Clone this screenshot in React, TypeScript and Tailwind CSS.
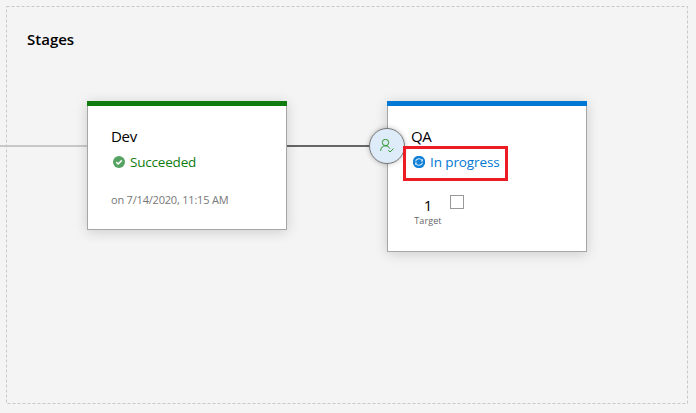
import type { ReactNode } from "react";

function SuccessIcon() {
  return (
    <svg width="12" height="12" viewBox="0 0 12 12" className="shrink-0">
      <circle cx="6" cy="6" r="6" fill="#55a362" />
      <path d="M3.3 6.1 5.2 8 8.8 4.4" fill="none" stroke="#fff" strokeWidth="1.5" />
    </svg>
  );
}

function ProgressIcon() {
  return (
    <svg width="12" height="12" viewBox="0 0 12 12" className="shrink-0">
      <circle cx="6" cy="6" r="6.2" fill="#0f80d7" />
      <path
        d="M2.5 5.3A3.6 3.4 0 0 1 8.9 4.2M9.5 6.7A3.6 3.4 0 0 1 3.1 7.8"
        fill="none"
        stroke="#c2dff5"
        strokeWidth="1.2"
      />
      <path d="M10 2.8V5.4H7.4ZM2 9.2V6.6H4.6Z" fill="#c2dff5" />
    </svg>
  );
}

function ApproverIcon() {
  return (
    <svg width="14" height="15" viewBox="0 0 14 15" fill="none" stroke="#2c962c" strokeWidth="1">
      <circle cx="5.5" cy="3.5" r="3.2" />
      <path d="M0.6 11.8C0.8 8.7 2.7 6.8 5.5 6.8C7.5 6.8 8.9 7.8 9.7 9.6" />
      <path d="M8.3 11.2 10.1 13 13.6 9.5" />
    </svg>
  );
}

function StageCard({ accent, size, children }: { accent: string; size: string; children: ReactNode }) {
  return (
    <section
      className={`relative w-[200px] shrink-0 border border-t-0 border-[#a6a6a6] bg-white shadow-[0_2px_12px_rgba(0,0,0,0.16)] ${size}`}
    >
      <div className={`-mx-px h-[5px] ${accent}`} />
      {children}
    </section>
  );
}

export default function App() {
  return (
    <main className="h-[413px] w-[696px] overflow-hidden bg-[#f4f4f4] pt-[6px] font-['Open_Sans','Noto_Sans',sans-serif] text-black">
      <div className="relative h-[398px]">
        <svg className="absolute top-0 left-[6px]" width="682" height="398">
          <rect x="0.5" y="0.5" width="681" height="397" fill="none" stroke="#c8c8c8" strokeDasharray="3 2" />
        </svg>
        <h1 className="ml-[27px] pt-[23px] pb-px text-[15px] leading-[20px] font-semibold tracking-[0px]">Stages</h1>
        <div className="mt-[51px] flex items-start">
          <div className="mt-[44px] h-[2px] w-[87px] bg-[#c8c8c8]" />
          <StageCard accent="bg-[#107c10]" size="h-[129px]">
            <div className="pt-[20px] pl-[23px]">
              <h2 className="text-[15px] leading-[20px] font-normal tracking-[-0.3px]">Dev</h2>
              <div className="mt-[6px] ml-[2px] flex h-[20px] items-center gap-[5px] text-[#107c10]">
                <SuccessIcon />
                <span className="text-[13.5px] leading-[20px] tracking-[-0.2px]">Succeeded</span>
              </div>
              <p className="mt-[20px] text-[11px] leading-[16px] tracking-[-0.2px] text-[#777]">on 7/14/2020, 11:15 AM</p>
            </div>
          </StageCard>
          <div className="mt-[44px] h-[2px] w-[100px] bg-[#666]" />
          <StageCard accent="bg-[#0078d4]" size="h-[151px]">
            <div className="absolute top-[27px] -left-[19px] flex size-[36px] items-center justify-center rounded-full border border-[#777] bg-[#deecf9] shadow-[0_0_5px_rgba(0,0,0,0.25)]">
              <ApproverIcon />
            </div>
            <div className="pt-[20px] pl-[23px]">
              <h2 className="text-[15px] leading-[20px] font-normal tracking-[-0.3px]">QA</h2>
              <div className="mt-[6px] ml-[2px] flex h-[20px] items-center gap-[5px] text-[#0078d4]">
                <ProgressIcon />
                <span className="text-[13.5px] leading-[20px] tracking-[-0.1px]">In progress</span>
              </div>
              <div className="mt-[23px] flex items-start gap-[7px] pl-[2px]">
                <div className="flex w-[30px] flex-col items-center">
                  <span className="text-[15px] leading-[20px]">1</span>
                  <span className="text-[9px] leading-[12px] tracking-[0.1px] text-[#666]">Target</span>
                </div>
                <div className="size-[14px] border border-[#999] bg-white" />
              </div>
            </div>
            <div className="absolute top-[45px] left-[15px] h-[35px] w-[105px] border-[3px] border-[#ed1c24]" />
          </StageCard>
        </div>
      </div>
    </main>
  );
}
